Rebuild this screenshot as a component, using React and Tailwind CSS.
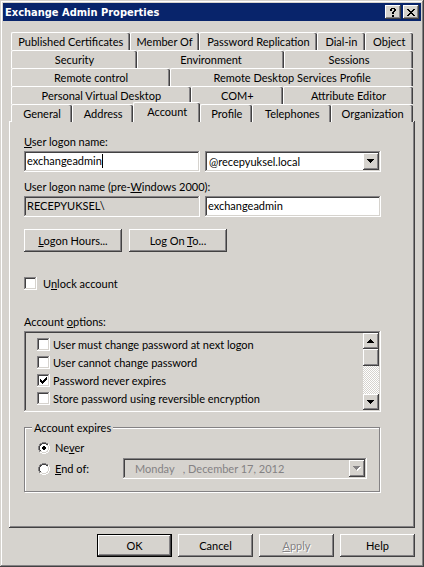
import React, { useState } from "react";

const raised =
  "bg-[#d6d3ce] shadow-[inset_-1px_-1px_0_#424142,inset_1px_1px_0_#fff,inset_-2px_-2px_0_#848284]";
const sunken =
  "shadow-[inset_-1px_-1px_0_#fff,inset_1px_1px_0_#848284,inset_-2px_-2px_0_#d6d3ce,inset_2px_2px_0_#424142]";

const tabRows = [
  [
    { label: "Published Certificates", size: "flex-[119]" },
    { label: "Member Of", size: "flex-[69]" },
    { label: "Password Replication", size: "flex-[119]" },
    { label: "Dial-in", size: "flex-[47]" },
    { label: "Object", size: "flex-[48]" },
  ],
  [
    { label: "Security", size: "flex-[126]" },
    { label: "Environment", size: "flex-[147]" },
    { label: "Sessions", size: "flex-[129]" },
  ],
  [
    { label: "Remote control", size: "flex-[159]" },
    { label: "Remote Desktop Services Profile", size: "flex-[243]" },
  ],
  [
    { label: "Personal Virtual Desktop", size: "flex-[180]" },
    { label: "COM+", size: "flex-[92]" },
    { label: "Attribute Editor", size: "flex-[130]" },
  ],
  [
    { label: "General", size: "flex-[61]" },
    { label: "Address", size: "flex-[61]" },
    { label: "Account", size: "flex-[67]", active: true },
    { label: "Profile", size: "flex-[52]" },
    { label: "Telephones", size: "flex-[79]" },
    { label: "Organization", size: "flex-[82]" },
  ],
];

const initialOptions = [
  { id: "must-change", label: "User must change password at next logon", checked: false },
  { id: "cannot-change", label: "User cannot change password", checked: false },
  { id: "never-expires", label: "Password never expires", checked: true },
  { id: "reversible", label: "Store password using reversible encryption", checked: false },
];

export default function App() {
  const [logon, setLogon] = useState("exchangeadmin");
  const [legacyLogon, setLegacyLogon] = useState("exchangeadmin");
  const [unlock, setUnlock] = useState(false);
  const [options, setOptions] = useState(initialOptions);
  const [expires, setExpires] = useState("never");

  const toggle = (id) =>
    setOptions(options.map((o) => (o.id === id ? { ...o, checked: !o.checked } : o)));

  return (
    <div className="bg-[#d6d3ce] p-[3px] pb-[10px] font-[Lato,Arial,sans-serif] text-[11px] leading-[13px] text-black shadow-[inset_-1px_-1px_0_#424142,inset_1px_1px_0_#d6d3ce,inset_-2px_-2px_0_#848284,inset_2px_2px_0_#fff]">
      {/* Title bar */}
      <header className="flex h-[18px] items-center gap-[2px] bg-[#08246b] pr-[2px] pl-[2px]">
        <h1 className="flex-1 font-['DejaVu_Sans_Condensed',Tahoma,sans-serif] font-bold text-white">
          Exchange Admin Properties
        </h1>
        <button aria-label="Help" className={`grid h-[14px] w-4 place-items-center ${raised}`}>
          <svg width="8" height="9" viewBox="0 0 8 9" shapeRendering="crispEdges">
            <path d="M2 0h4v1H2zM1 1h2v2H1zM5 1h2v2H5zM4 3h2v1H4zM3 4h2v2H3zM3 7h2v2H3z" />
          </svg>
        </button>
        <button aria-label="Close" className={`grid h-[14px] w-4 place-items-center ${raised}`}>
          <svg width="8" height="7" viewBox="0 0 8 7" shapeRendering="crispEdges">
            <path d="M0 0h2v1H0zM6 0h2v1H6zM1 1h2v1H1zM5 1h2v1H5zM2 2h4v1H2zM3 3h2v1H3zM2 4h4v1H2zM1 5h2v1H1zM5 5h2v1H5zM0 6h2v1H0zM6 6h2v1H6z" />
          </svg>
        </button>
      </header>

      <main className="px-[6px] pt-[11px]">
        <nav className="px-[2px]" role="tablist">
          {tabRows.map((row, i) => (
            <div key={i} className="flex h-[18px] items-end">
              {row.map((tab) => (
                <Tab key={tab.label} {...tab} />
              ))}
            </div>
          ))}
        </nav>

        {/* Account page */}
        <section className="-mt-px pt-[14px] pr-[34px] pb-[36px] pl-[15px] shadow-[inset_-1px_-1px_0_#424142,inset_1px_1px_0_#fff,inset_-2px_-2px_0_#848284]">
          <label htmlFor="logon" className="block">
            <u>U</u>ser logon name:
          </label>
          <div className="mt-[3px] grid grid-cols-2 gap-[5px]">
            <div className="relative">
              <TextBox id="logon" value={logon} onChange={(e) => setLogon(e.target.value)} />
              <span className="pointer-events-none absolute top-[3px] left-[3px] h-[14px] border-r border-black whitespace-pre">
                <span className="invisible">{logon}</span>
              </span>
            </div>
            <div className="relative">
              <select
                aria-label="Domain suffix"
                className={`block h-[21px] w-full appearance-none bg-white pr-5 pl-1 ${sunken}`}
              >
                <option>@recepyuksel.local</option>
              </select>
              <ArrowBox />
            </div>
          </div>

          <label htmlFor="legacy" className="mt-2 block">
            User logon name (pre-<u>W</u>indows 2000):
          </label>
          <div className="mt-[3px] grid grid-cols-2 gap-[5px]">
            <TextBox aria-label="Domain" readOnly value={"RECEPYUKSEL\\"} tone="bg-[#d6d3ce]" />
            <TextBox
              id="legacy"
              value={legacyLogon}
              onChange={(e) => setLegacyLogon(e.target.value)}
            />
          </div>

          <div className="mt-3 flex gap-[7px]">
            <button className={`h-[23px] w-[98px] ${raised}`}>
              <u>L</u>ogon Hours...
            </button>
            <button className={`h-[23px] w-[98px] ${raised}`}>
              Log On <u>T</u>o...
            </button>
          </div>

          <label className="mt-[25px] flex w-fit items-center gap-[6px]">
            <CheckBox checked={unlock} onChange={() => setUnlock(!unlock)} />
            <span>
              U<u>n</u>lock account
            </span>
          </label>

          <h2 className="mt-[25px]" id="options-title">
            Account <u>o</u>ptions:
          </h2>
          <div
            role="group"
            aria-labelledby="options-title"
            className={`mt-[3px] flex h-[81px] p-[2px] ${sunken}`}
          >
            <div className="flex flex-1 flex-col gap-[5px] pt-[5px] pl-[11px]">
              {options.map((o) => (
                <label key={o.id} className="flex items-center gap-[3px]">
                  <CheckBox checked={o.checked} onChange={() => toggle(o.id)} />
                  {o.label}
                </label>
              ))}
            </div>
            <div className="flex w-4 flex-col bg-[repeating-conic-gradient(#fff_0_25%,#d6d3ce_0_50%)] bg-[length:2px_2px]">
              <button aria-label="Scroll up" className={`grid h-4 place-items-center ${raised}`}>
                <Triangle up />
              </button>
              <div className={`h-[17px] ${raised}`} />
              <button
                aria-label="Scroll down"
                className={`mt-auto grid h-4 place-items-center ${raised}`}
              >
                <Triangle />
              </button>
            </div>
          </div>

          <fieldset className="mt-[9px] mr-px border border-[#848284] pr-3 pb-3 pl-[13px] shadow-[inset_1px_1px_0_#fff,1px_1px_0_#fff]">
            <legend className="-ml-[6px] bg-[#d6d3ce] px-[2px]">Account expires</legend>
            <label className="mt-[7px] flex w-fit items-center gap-[5px]">
              <Radio checked={expires === "never"} onChange={() => setExpires("never")} />
              <span>
                Ne<u>v</u>er
              </span>
            </label>
            <div className="mt-1 flex items-center">
              <label className="flex w-[85px] items-center gap-[5px]">
                <Radio checked={expires === "end"} onChange={() => setExpires("end")} />
                <span>
                  <u>E</u>nd of:
                </span>
              </label>
              <div className="relative flex-1">
                <select
                  aria-label="Expiry date"
                  disabled
                  className={`block h-[21px] w-full appearance-none bg-[#d6d3ce] pr-5 pl-3 whitespace-pre text-[#848284] opacity-100 ${sunken}`}
                >
                  <option>{"Monday\u00a0\u00a0\u00a0, December 17, 2012"}</option>
                </select>
                <ArrowBox muted />
              </div>
            </div>
          </fieldset>
        </section>

        <footer className="mt-[6px] flex justify-end gap-[6px]">
          <button className="h-[23px] w-[75px] border border-black bg-[#d6d3ce] shadow-[inset_-1px_-1px_0_#424142,inset_1px_1px_0_#fff,inset_-2px_-2px_0_#848284]">
            OK
          </button>
          <button className={`h-[23px] w-[75px] ${raised}`}>Cancel</button>
          <button
            disabled
            className={`h-[23px] w-[75px] text-[#848284] [text-shadow:1px_1px_0_#fff] ${raised}`}
          >
            <u>A</u>pply
          </button>
          <button className={`h-[23px] w-[75px] ${raised}`}>Help</button>
        </footer>
      </main>
    </div>
  );
}

function Tab({ label, size, active }) {
  return (
    <button
      role="tab"
      aria-selected={!!active}
      className={`min-w-0 rounded-t-[2px] border-t border-l border-white bg-[#d6d3ce] whitespace-nowrap shadow-[inset_-1px_0_0_#424142,inset_-2px_0_0_#848284] ${size} ${
        active ? "relative h-5 pb-[2px]" : "h-[18px]"
      }`}
    >
      {label}
    </button>
  );
}

function TextBox({ tone = "bg-white", ...props }) {
  return (
    <input
      type="text"
      className={`block h-[21px] w-full px-[3px] pb-[2px] outline-none ${tone} ${sunken}`}
      {...props}
    />
  );
}

function CheckBox({ checked, onChange }) {
  return (
    <span className="relative block size-[13px]">
      <input
        type="checkbox"
        checked={checked}
        onChange={onChange}
        className={`block size-[13px] appearance-none bg-white ${sunken}`}
      />
      {checked && (
        <svg
          className="pointer-events-none absolute inset-0"
          width="13"
          height="13"
          shapeRendering="crispEdges"
        >
          <path d="M3 5h1v3H3zM4 6h1v3H4zM5 7h1v3H5zM6 6h1v3H6zM7 5h1v3H7zM8 4h1v3H8zM9 3h1v3H9z" />
        </svg>
      )}
    </span>
  );
}

function Radio({ checked, onChange }) {
  return (
    <span className="relative block size-3">
      <input
        type="radio"
        name="expires"
        checked={checked}
        onChange={onChange}
        className="block size-3 appearance-none"
      />
      <svg
        className="pointer-events-none absolute inset-0"
        width="12"
        height="12"
        shapeRendering="crispEdges"
      >
        <path fill="#fff" d="M4 2h4v1h1v1h1v4H9v1H8v1H4V9H3V8H2V4h1V3h1z" />
        <path fill="#848284" d="M4 0h4v1H4zM2 1h2v1H2zM8 1h2v1H8zM1 2h1v2H1zM0 4h1v4H0zM1 8h1v2H1z" />
        <path fill="#424142" d="M4 1h4v1H4zM2 2h2v1H2zM8 2h2v1H8zM2 3h1v1H2zM1 4h1v4H1zM2 8h1v1H2z" />
        <path fill="#fff" d="M10 2h1v2h-1zM11 4h1v4h-1zM10 8h1v2h-1zM8 10h2v1H8zM2 10h2v1H2zM4 11h4v1H4z" />
        {checked && <path d="M5 4h2v1h1v2H7v1H5V7H4V5h1z" />}
      </svg>
    </span>
  );
}

function ArrowBox({ muted }) {
  return (
    <span
      className={`pointer-events-none absolute top-[2px] right-[2px] grid h-[17px] w-4 place-items-center ${raised}`}
    >
      <Triangle muted={muted} />
    </span>
  );
}

function Triangle({ up, muted }) {
  return (
    <svg width="8" height="5" viewBox="0 0 8 5" shapeRendering="crispEdges">
      {muted && <path fill="#fff" d="M1 1h7v1H7v1H6v1H5v1H4V4H3V3H2V2H1z" />}
      <path
        fill={muted ? "#848284" : "#000"}
        d={up ? "M3 0h1v1h1v1h1v1h1v1H0V3h1V2h1V1h1z" : "M0 0h7v1H6v1H5v1H4v1H3V3H2V2H1V1H0z"}
      />
    </svg>
  );
}
